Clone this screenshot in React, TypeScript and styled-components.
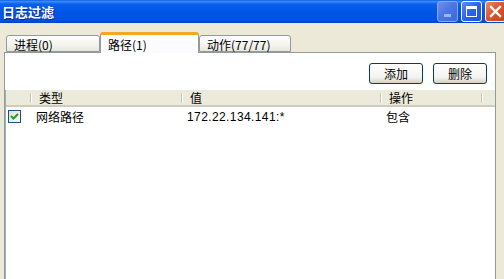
import React from 'react';
import styled, { createGlobalStyle } from 'styled-components';

const GlobalStyle = createGlobalStyle`
  html, body {
    margin: 0;
    padding: 0;
    background: #ece9d8;
  }

  body {
    font-family: 'Noto Sans CJK SC', 'DejaVu Sans', sans-serif;
    font-size: 12px;
    color: #000;
  }
`;

interface IColumn {
  title: string;
  width: number;
}

const columns: IColumn[] = [
  { title: '', width: 25 },
  { title: '类型', width: 151 },
  { title: '值', width: 199 },
  { title: '操作', width: 101 },
];

const rows = [{ type: '网络路径', value: '172.22.134.141:*', action: '包含', checked: true }];

const tabs = [
  { label: '进程(0)', width: 94, active: false },
  { label: '路径(1)', width: 99, active: true },
  { label: '动作(77/77)', width: 92, active: false },
];

export default function App() {
  return (
    <>
      <GlobalStyle />
      <Window>
        <TitleBar>
          <Title>日志过滤</Title>
          <Controls>
            <CtlButton $kind="min">
              <MinGlyph />
            </CtlButton>
            <CtlButton $kind="max">
              <MaxGlyph />
            </CtlButton>
            <CtlButton $kind="close">
              <svg width="13" height="13" viewBox="0 0 13 13">
                <path d="M2 2 L11 11 M11 2 L2 11" stroke="#fff" strokeWidth="2.4" strokeLinecap="square" />
              </svg>
            </CtlButton>
          </Controls>
        </TitleBar>

        <Body>
          <TabStrip>
            {tabs.map((tab) => (
              <Tab key={tab.label} $active={tab.active} style={{ width: tab.width }}>
                {tab.label}
              </Tab>
            ))}
          </TabStrip>

          <Panel>
            <Toolbar>
              <PushButton>添加</PushButton>
              <PushButton>删除</PushButton>
            </Toolbar>

            <ListView>
              <HeaderRow>
                {columns.map((col, index) => (
                  <HeaderCell key={index} style={{ width: col.width }}>
                    {col.title}
                  </HeaderCell>
                ))}
                <HeaderCell style={{ flex: 1 }} />
              </HeaderRow>

              {rows.map((row, index) => (
                <Row key={index}>
                  <Cell style={{ width: columns[0].width }}>
                    <CheckBox>
                      {row.checked && (
                        <svg width="9" height="9" viewBox="0 0 9 9">
                          <path d="M1 4 L3.5 6.5 L8 2" stroke="#21a121" strokeWidth="2" fill="none" />
                        </svg>
                      )}
                    </CheckBox>
                  </Cell>
                  <Cell style={{ width: columns[1].width }}>{row.type}</Cell>
                  <Cell $mono style={{ width: columns[2].width }}>
                    {row.value}
                  </Cell>
                  <Cell style={{ width: columns[3].width }}>{row.action}</Cell>
                </Row>
              ))}
            </ListView>
          </Panel>
        </Body>
      </Window>
    </>
  );
}

const Window = styled.div`
  display: flex;
  flex-direction: column;

  width: 504px;
  height: 279px;

  overflow: hidden;

  background: #ece9d8;
`;

const TitleBar = styled.div`
  display: flex;
  align-items: center;
  justify-content: space-between;

  height: 23px;
  flex-shrink: 0;

  background: linear-gradient(
    to bottom,
    #0a5ee0 0%,
    #3b8cf6 6%,
    #0860ec 18%,
    #0055e5 55%,
    #0053e2 88%,
    #0041c4 100%
  );
`;

const Title = styled.div`
  padding-left: 2px;

  font-size: 13px;
  font-weight: bold;
  color: #fff;

  text-shadow: 1px 1px 0 #0a2a8a;
`;

const Controls = styled.div`
  display: flex;
  gap: 3px;

  margin-right: -2px;
`;

const CtlButton = styled.div<{ $kind: 'min' | 'max' | 'close' }>`
  display: flex;
  align-items: center;
  justify-content: center;

  width: 21px;
  height: 21px;

  box-sizing: border-box;
  border: 1px solid ${({ $kind }) => ($kind === 'min' ? '#8aa8f0' : '#fff')};
  border-radius: 3px;

  background: ${({ $kind }) =>
    $kind === 'close'
      ? 'linear-gradient(135deg, #f08a6a 0%, #e0542c 45%, #c8401c 100%)'
      : $kind === 'min'
        ? 'linear-gradient(135deg, #6f92ee 0%, #4a74e6 50%, #3e68e0 100%)'
        : 'linear-gradient(135deg, #5a8cf8 0%, #2a62ee 50%, #1e52e0 100%)'};
`;

const MinGlyph = styled.div`
  width: 7px;
  height: 3px;

  margin-top: 8px;

  background: #9cb4f2;
`;

const MaxGlyph = styled.div`
  width: 11px;
  height: 11px;

  box-sizing: border-box;
  border: 1px solid #fff;
  border-top-width: 3px;
`;

const Body = styled.div`
  display: flex;
  flex-direction: column;

  flex: 1;

  padding: 9px 8px 0 4px;
`;

const TabStrip = styled.div`
  display: flex;
  align-items: flex-end;

  height: 20px;

  padding-left: 2px;

  position: relative;
  z-index: 1;
`;

const Tab = styled.div<{ $active: boolean }>`
  box-sizing: border-box;
  height: ${({ $active }) => ($active ? '21px' : '17px')};

  margin-bottom: ${({ $active }) => ($active ? '-1px' : '0')};

  padding-left: 7px;
  padding-top: ${({ $active }) => ($active ? '2px' : '1px')};

  line-height: 15px;

  border: 1px solid #919b9c;
  border-bottom: ${({ $active }) => ($active ? 'none' : '1px solid #919b9c')};
  border-top: ${({ $active }) => ($active ? '3px solid #f5a623' : '1px solid #919b9c')};
  border-radius: 3px 3px 0 0;

  background: ${({ $active }) =>
    $active ? '#fcfcfe' : 'linear-gradient(to bottom, #fefefe 0%, #f4f3ee 60%, #e7e6de 100%)'};
`;

const Panel = styled.div`
  display: flex;
  flex-direction: column;

  flex: 1;

  border: 1px solid #919b9c;
  border-bottom: none;

  background: #fff;
`;

const Toolbar = styled.div`
  display: flex;
  justify-content: flex-end;
  gap: 10px;

  padding: 10px 8px 6px 0;
`;

const PushButton = styled.div`
  display: flex;
  align-items: center;
  justify-content: center;

  width: 54px;
  height: 21px;

  box-sizing: border-box;
  border: 1px solid #003c74;
  border-radius: 3px;

  background: linear-gradient(to bottom, #ffffff 0%, #f3f3ef 70%, #d6d0c5 100%);

  font-size: 12px;
`;

const ListView = styled.div`
  display: flex;
  flex-direction: column;

  flex: 1;

  border-left: 1px solid #a5acb5;
`;

const HeaderRow = styled.div`
  display: flex;

  height: 17px;

  box-sizing: border-box;
  border-bottom: 2px solid #d0ccbd;

  background: #ebeadb;
`;

const HeaderCell = styled.div`
  box-sizing: border-box;

  padding-left: 8px;

  line-height: 15px;

  position: relative;

  &::after {
    content: '';
    position: absolute;
    right: 0;
    top: 3px;
    width: 1px;
    height: 10px;
    background: #c7c5b2;
    box-shadow: 1px 0 0 #fff;
  }

  &:last-child::after {
    display: none;
  }
`;

const Row = styled.div`
  display: flex;
  align-items: center;

  height: 17px;
  margin-top: 1px;
`;

const Cell = styled.div<{ $mono?: boolean }>`
  box-sizing: border-box;

  padding-left: 5px;

  font-family: ${({ $mono }) =>
    $mono ? "'Liberation Sans', 'DejaVu Sans', sans-serif" : "'Noto Sans CJK SC', sans-serif"};
  font-size: 12px;
  letter-spacing: ${({ $mono }) => ($mono ? '0.4px' : '0')};
`;

const CheckBox = styled.div`
  display: flex;
  align-items: center;
  justify-content: center;

  width: 13px;
  height: 13px;

  margin-left: -3px;

  box-sizing: border-box;
  border: 1px solid #1c5180;

  background: linear-gradient(135deg, #dcdcd7 0%, #fbfbf9 100%);
`;
